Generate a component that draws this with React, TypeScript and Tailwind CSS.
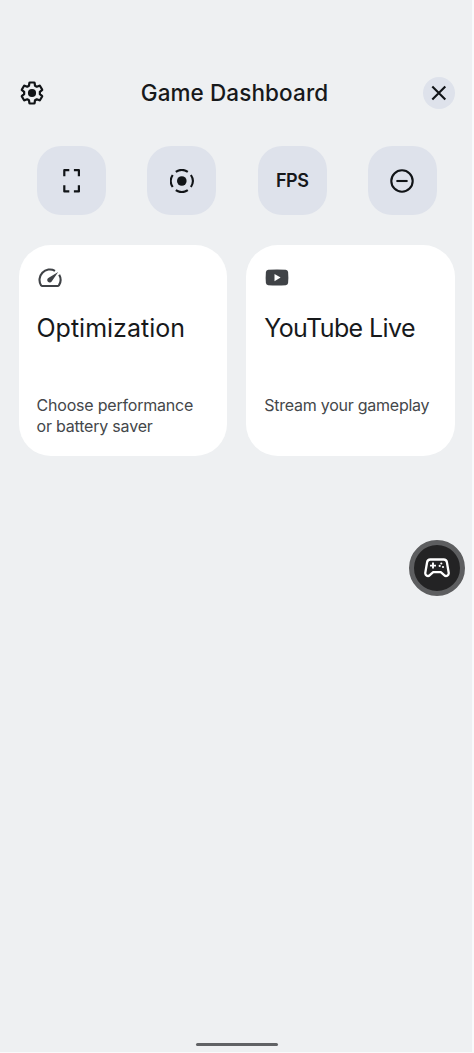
import React from 'react'

const GearIcon = () => (
  <svg className="size-7" viewBox="0 0 24 24" fill="none">
    <path
      transform="translate(1.2 1.2) scale(.9)"
      stroke="#111417"
      strokeWidth="2.1"
      strokeLinejoin="round"
      d="M19.43 12.98c.04-.32.07-.64.07-.98 0-.34-.03-.66-.07-.98l2.11-1.65c.19-.15.24-.42.12-.64l-2-3.46a.5.5 0 0 0-.61-.22l-2.49 1c-.52-.4-1.08-.73-1.69-.98l-.38-2.65A.49.49 0 0 0 14 2h-4c-.25 0-.46.18-.49.42l-.38 2.65c-.61.25-1.17.59-1.69.98l-2.49-1a.5.5 0 0 0-.61.22l-2 3.46c-.13.22-.07.49.12.64l2.11 1.65c-.04.32-.07.65-.07.98 0 .33.03.66.07.98l-2.11 1.65c-.19.15-.24.42-.12.64l2 3.46c.12.22.39.3.61.22l2.49-1c.52.4 1.08.73 1.69.98l.38 2.65c.03.24.24.42.49.42h4c.25 0 .46-.18.49-.42l.38-2.65c.61-.25 1.17-.59 1.69-.98l2.49 1c.23.08.49 0 .61-.22l2-3.46c.12-.22.07-.49-.12-.64z"
    />
    <circle cx="12" cy="12" r="3.5" fill="#111417" />
  </svg>
)

const CloseIcon = () => (
  <svg className="size-4" viewBox="0 0 16 16" stroke="#111417" strokeWidth="2.1">
    <path d="M1.3 1.5l13 13M14.3 1.5l-13 13" />
  </svg>
)

const ScreenshotIcon = () => (
  <svg className="size-6" viewBox="0 0 24 24" fill="none" stroke="#111417" strokeWidth="2.2" strokeLinejoin="round">
    <path d="M4.3 7.3V1.2h5M13.9 1.2h5v6.1M4.3 16.3v6.1h5M13.9 22.4h5v-6.1" />
  </svg>
)

const RecordIcon = () => (
  <svg className="size-6" viewBox="0 0 24 24" fill="none" stroke="#111417" strokeWidth="2.1">
    <circle cx="11.8" cy="12" r="4.8" fill="#111417" stroke="none" />
    <path d="M5.8 2.9a10.7 10.7 0 0 1 12 0M5.8 21.1a10.7 10.7 0 0 0 12 0M2.7 6a10.7 10.7 0 0 0 0 12M20.9 6a10.7 10.7 0 0 1 0 12" />
  </svg>
)

const MinusIcon = () => (
  <svg className="size-6" viewBox="0 0 24 24" fill="none" stroke="#111417" strokeWidth="2.1">
    <circle cx="12" cy="12" r="10.7" />
    <path d="M6.4 12h11.2" />
  </svg>
)

const GaugeIcon = () => (
  <svg className="h-5 w-6" viewBox="0 0 24 20" fill="none">
    <path
      d="M17 2.8A10.4 10.4 0 0 0 3.1 17.4Q3.6 18 4.3 18h15.4Q20.4 18 20.9 17.4A10.3 10.3 0 0 0 21.2 6.8"
      stroke="#3f4246"
      strokeWidth="2.1"
    />
    <path d="M20.2 4.1L14 13a2.5 2.5 0 1 1-3.3-3.3z" fill="#3f4246" />
  </svg>
)

const YoutubeIcon = () => (
  <svg className="h-5 w-6" viewBox="0 0 24 20">
    <path d="M3.2 1.8Q12 1 20.8 1.8q2 .3 2.3 2.2.5 5.5 0 11-.3 1.9-2.3 2.2-8.8.7-17.6 0-2-.3-2.3-2.2-.5-5.5 0-11 .3-1.9 2.3-2.2z" fill="#3f4246" />
    <path d="M9.5 6v7.2l6.1-3.6z" fill="#fff" />
  </svg>
)

const GamepadIcon = () => (
  <svg className="h-5 w-[26px]" viewBox="0 0 26 20" fill="none" stroke="#fff">
    <path
      d="M6.3 1.5h13.4q2.7 0 3.2 2.7l1.8 10.5c.4 2.9-2.6 4.3-4.5 2.4L16.8 14.2H9.2l-3.4 2.9c-1.9 1.9-4.9.5-4.5-2.4L3.1 4.2Q3.6 1.5 6.3 1.5z"
      strokeWidth="2.3"
      strokeLinejoin="round"
    />
    <path d="M9 4.6v6M6 7.6h6" strokeWidth="1.9" />
    <g fill="#fff" stroke="none">
      <circle cx="15.7" cy="7.9" r="1.1" />
      <circle cx="17.3" cy="5.5" r="1.1" />
      <circle cx="19" cy="9" r="1.1" />
    </g>
  </svg>
)

const Tile: React.FC<{ children: React.ReactNode }> = ({ children }) => (
  <button className="flex size-[69px] items-center justify-center rounded-3xl bg-[#dee2eb]">{children}</button>
)

interface CardProps {
  icon: React.ReactNode
  title: React.ReactNode
  children: React.ReactNode
}

const Card: React.FC<CardProps> = ({ icon, title, children }) => (
  <div className="flex h-[211px] flex-1 flex-col rounded-[32px] bg-white pt-[23px] pl-[18px]">
    <div className="pl-px">{icon}</div>
    <h2 className="mt-6 text-[25px] leading-8 whitespace-nowrap text-[#17191b]">{title}</h2>
    <p className="mt-[51px] text-base leading-[21px] whitespace-nowrap text-[#44474a]">{children}</p>
  </div>
)

export default function App() {
  return (
    <div className="h-[1053px] w-[474px] border-r-2 border-b border-[#f9fafb] bg-[#eef0f2] font-['Inter',sans-serif]">
      <div className="flex h-[1052px] flex-col">
        <header className="flex items-center justify-between pt-[77px] pr-[17px] pl-[18px]">
          <button>
            <GearIcon />
          </button>
          <h1 className="text-[22.5px] leading-8 font-medium tracking-[0.1px] text-[#17191b]">Game Dashboard</h1>
          <button className="flex size-8 items-center justify-center rounded-full bg-[#dee2eb]">
            <CloseIcon />
          </button>
        </header>

        <div className="mt-[37px] flex justify-between pr-[35px] pl-[37px]">
          <Tile>
            <ScreenshotIcon />
          </Tile>
          <Tile>
            <RecordIcon />
          </Tile>
          <Tile>
            <span className="text-lg font-semibold tracking-[-0.5px] text-[#17191b]">FPS</span>
          </Tile>
          <Tile>
            <MinusIcon />
          </Tile>
        </div>

        <div className="mt-[30px] flex gap-[19px] pr-[17px] pl-[18.5px]">
          <Card icon={<GaugeIcon />} title={<span>Optimization</span>}>
            <span className="tracking-[-0.2px]">
              Choose performance
              <br />
              or battery saver
            </span>
          </Card>
          <Card icon={<YoutubeIcon />} title={<span className="tracking-[-0.6px]">YouTube Live</span>}>
            <span className="tracking-[-0.25px]">Stream your gameplay</span>
          </Card>
        </div>

        <button className="mt-[84px] mr-[7px] flex size-14 items-center justify-center self-end rounded-full border-[5px] border-[#5d5e60] bg-[#232324]">
          <GamepadIcon />
        </button>

        <div className="mt-auto mb-[6px] ml-[196px] h-[3px] w-[82px] rounded-full bg-[#606265]" />
      </div>
    </div>
  )
}
